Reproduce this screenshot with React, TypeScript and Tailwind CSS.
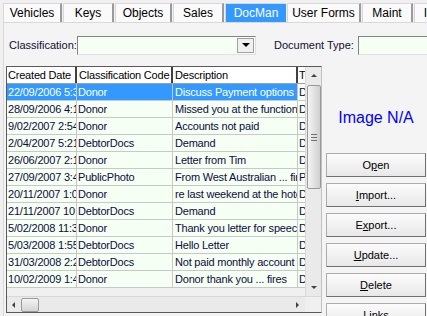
import React from "react";

const tabs = [
  { label: "Vehicles", w: "w-[59px]" },
  { label: "Keys", w: "w-[51px]" },
  { label: "Objects", w: "w-[57px]" },
  { label: "Sales", w: "w-[51px]" },
  { label: "DocMan", w: "w-[61px]", active: true },
  { label: "User Forms", w: "w-[74px]" },
  { label: "Maint", w: "w-[51px]" },
  { label: "Images", w: "w-[60px]" },
];

const rows = [
  ["22/09/2006 5:32:00 PM", "Donor", "Discuss Payment options", "Doc"],
  ["28/09/2006 4:10:00 PM", "Donor", "Missed you at the function", "Doc"],
  ["9/02/2007 2:54:00 PM", "Donor", "Accounts not paid", "Doc"],
  ["2/04/2007 5:21:00 PM", "DebtorDocs", "Demand", "Doc"],
  ["26/06/2007 2:15:00 PM", "Donor", "Letter from Tim", "Doc"],
  ["27/09/2007 3:40:00 PM", "PublicPhoto", "From West Australian ... fire", "Pic"],
  ["20/11/2007 1:05:00 PM", "Donor", "re last weekend at the hotel", "Doc"],
  ["21/11/2007 10:12:00 AM", "DebtorDocs", "Demand", "Doc"],
  ["5/02/2008 11:30:00 AM", "Donor", "Thank you letter for speech", "Doc"],
  ["5/03/2008 1:55:00 PM", "DebtorDocs", "Hello Letter", "Doc"],
  ["31/03/2008 2:20:00 PM", "DebtorDocs", "Not paid monthly account", "Doc"],
  ["10/02/2009 1:45:00 PM", "Donor", "Donor thank you ... fires", "Doc"],
];

const buttons: [string, string, string][] = [
  ["O", "p", "en"],
  ["", "I", "mport..."],
  ["E", "x", "port..."],
  ["", "U", "pdate..."],
  ["", "D", "elete"],
  ["", "L", "inks"],
];

function Btn({ parts }: { parts: [string, string, string] }) {
  return (
    <div className="h-[24px] w-[100px] shrink-0 flex items-center justify-center border border-[#adadad] border-b-[#707070] border-r-[#707070] bg-gradient-to-b from-[#fbfbfb] to-[#e8e8e8] text-black">
      <span>
        {parts[0]}
        <span className="underline">{parts[1]}</span>
        {parts[2]}
      </span>
    </div>
  );
}

function Arrow({ dir }: { dir: "up" | "down" | "left" | "right" }) {
  const pts = {
    up: "1,5 4,2 7,5",
    down: "1,2 4,5 7,2",
    left: "5,1 2,4 5,7",
    right: "2,1 5,4 2,7",
  }[dir];
  return (
    <svg width="8" height="8" viewBox="0 0 8 8">
      <polygon points={pts} fill="#404040" />
    </svg>
  );
}

export default function App() {
  return (
    <div
      className="w-[427px] h-[316px] overflow-hidden bg-[#f0f0f0] text-[11px] text-black"
      style={{ fontFamily: '"Liberation Sans", Arial, sans-serif' }}
    >
      {/* tab strip */}
      <div className="flex h-[22px] pl-[3px] pt-[3px] items-end">
        {tabs.map((t) => (
          <div
            key={t.label}
            className={
              "h-[19px] shrink-0 flex items-center justify-center whitespace-nowrap overflow-hidden border-t border-l border-[#d8d8d8] mr-[1px] text-[12px] " +
              t.w +
              (t.active
                ? " bg-[#3399ff] text-white border-[#3399ff]"
                : " bg-[#fafafa] border-r-2 border-r-[#9a9a9a]")
            }
          >
            {t.label}
          </div>
        ))}
      </div>

      {/* tab page */}
      <div className="h-[294px] ml-[3px] border-l border-t border-[#d9d9d9] bg-[#f4f4f4] pl-[2px]">
        <div className="flex items-center h-[19px] mt-[13px]">
          <span className="w-[71px] pl-[3px] text-[#101030] whitespace-nowrap">Classification:</span>
          <div className="w-[179px] h-[19px] flex items-center justify-end border border-[#828282] border-b-[#e0e0e0] border-r-[#e0e0e0] bg-[#f6fff4]">
            <div className="w-[17px] h-[15px] mr-[1px] flex items-center justify-center border border-[#a0a0a0] bg-[#f0f0f0]">
              <svg width="8" height="5" viewBox="0 0 8 5">
                <polygon points="0,0 8,0 4,4" fill="#000" />
              </svg>
            </div>
          </div>
          <span className="ml-[18px] w-[84px] text-[#101030] whitespace-nowrap">Document Type:</span>
          <div className="flex-1 h-[19px] border border-[#828282] border-b-[#e0e0e0] border-r-0 bg-[#f6fff4]" />
        </div>

        <div className="flex mt-[11px] items-start">
          {/* data grid */}
          <div className="w-[316px] h-[247px] border border-[#5a5a5a] border-r-[#c0c0c0] bg-[#f0f0f0] flex flex-col">
            <div className="flex h-[229px]">
              <div className="w-[299px] overflow-hidden tracking-[-0.2px]">
                <div className="flex h-[17px] bg-white border-b border-[#a0a0a0]">
                  <div className="w-[70px] shrink-0 border-r-2 border-[#404040] px-[1px] whitespace-nowrap overflow-hidden leading-[17px]">
                    Created Date
                  </div>
                  <div className="w-[96px] shrink-0 border-r-2 border-[#404040] px-[2px] whitespace-nowrap overflow-hidden leading-[17px]">
                    Classification Code
                  </div>
                  <div className="w-[125px] shrink-0 border-r-2 border-[#404040] px-[2px] whitespace-nowrap overflow-hidden leading-[17px]">
                    Description
                  </div>
                  <div className="w-[10px] shrink-0 px-[1px] whitespace-nowrap overflow-hidden leading-[17px]">Type</div>
                </div>
                {rows.map((r, i) => {
                  const sel = i === 0;
                  return (
                    <div key={i} className="flex h-[17px] border-b border-[#c8c8c8] bg-[#f6fff4] text-[#0c0c40]">
                      <div
                        className={
                          "w-[70px] shrink-0 border-r border-[#c8c8c8] px-[1px] whitespace-nowrap overflow-hidden leading-[16px]" +
                          (sel ? " bg-[#3399ff] text-white" : "")
                        }
                      >
                        {r[0]}
                      </div>
                      <div
                        className={
                          "w-[96px] shrink-0 border-r border-[#c8c8c8] px-[1px] whitespace-nowrap overflow-hidden leading-[16px]" +
                          (sel ? " bg-[#3399ff] text-white" : "")
                        }
                      >
                        {r[1]}
                      </div>
                      <div
                        className={
                          "w-[125px] shrink-0 border-r border-[#c8c8c8] px-[2px] whitespace-nowrap overflow-hidden leading-[16px]" +
                          (sel ? " bg-[#3399ff] text-white" : "")
                        }
                      >
                        {r[2]}
                      </div>
                      <div className="w-[10px] shrink-0 px-[1px] whitespace-nowrap overflow-hidden leading-[16px]">
                        {r[3]}
                      </div>
                    </div>
                  );
                })}
              </div>
              {/* vertical scrollbar */}
              <div className="w-[16px] h-[229px] bg-[#eaeaea] border-l border-[#d8d8d8] flex flex-col items-center">
                <div className="h-[17px] flex items-center justify-center">
                  <Arrow dir="up" />
                </div>
                <div className="w-[14px] h-[104px] mt-[1px] rounded-[2px] border border-[#9a9a9a] bg-gradient-to-r from-[#f4f4f4] via-[#e2e2e2] to-[#cfcfcf] flex items-center justify-center">
                  <div className="flex flex-col gap-[2px]">
                    <div className="w-[6px] h-[1px] bg-[#707070]" />
                    <div className="w-[6px] h-[1px] bg-[#707070]" />
                    <div className="w-[6px] h-[1px] bg-[#707070]" />
                  </div>
                </div>
                <div className="flex-1" />
                <div className="h-[17px] flex items-center justify-center">
                  <Arrow dir="down" />
                </div>
              </div>
            </div>
            {/* horizontal scrollbar */}
            <div className="flex h-[16px] border-t border-[#d8d8d8]">
              <div className="w-[299px] bg-[#eaeaea] flex items-center">
                <div className="w-[14px] flex items-center justify-center">
                  <Arrow dir="left" />
                </div>
                <div className="w-[18px] h-[14px] rounded-[2px] border border-[#9a9a9a] bg-gradient-to-b from-[#f4f4f4] to-[#d4d4d4]" />
                <div className="flex-1" />
                <div className="w-[14px] flex items-center justify-center">
                  <Arrow dir="right" />
                </div>
              </div>
              <div className="w-[16px] bg-[#f0f0f0]" />
            </div>
          </div>

          {/* right panel */}
          <div className="ml-[4px] flex flex-col gap-[6px]">
            <div className="h-[81px] flex items-center justify-center pt-[22px] text-[16px] text-[#0000ff]">
              Image N/A
            </div>
            {buttons.map((b, i) => (
              <Btn key={i} parts={b} />
            ))}
          </div>
        </div>
      </div>
    </div>
  );
}
